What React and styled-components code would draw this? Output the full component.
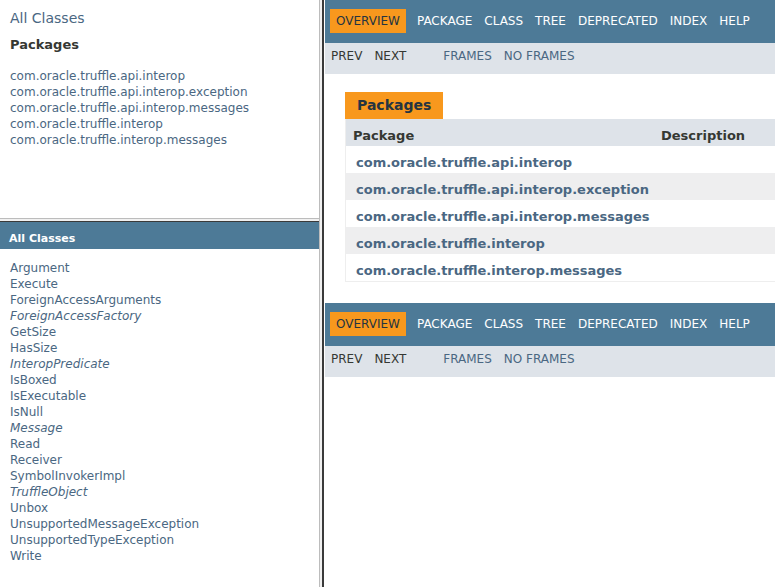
import React from "react";
import styled, { createGlobalStyle } from "styled-components";

const Global = createGlobalStyle`
  html, body { margin: 0; padding: 0; background: #fff; }
  body {
    font-family: "DejaVu Sans", Arial, Helvetica, sans-serif;
    font-size: 14px;
    color: #353833;
    overflow: hidden;
  }
  a { text-decoration: none; color: #4A6782; }
  ul { margin: 0; padding: 0; list-style: none; }
`;

const Frameset = styled.div`
  display: grid;
  grid-template-columns: 319px 6px 1fr;
  height: 587px;
  overflow: hidden;
`;

const LeftColumn = styled.div`
  display: grid;
  grid-template-rows: 218px 4px 1fr;
  min-height: 0;
  overflow: hidden;
`;

const VSep = styled.div`
  background: linear-gradient(
    to right,
    #bcbcbc 0 1px,
    #f0f0f0 1px 3px,
    #3a3a3a 3px 5px,
    #ffffff 5px 6px
  );
`;

const HSep = styled.div`
  background: linear-gradient(
    to bottom,
    #bcbcbc 0 1px,
    #f0f0f0 1px 3px,
    #3a3a3a 3px 4px
  );
`;

const Frame = styled.div`
  background: #fff;
  overflow: hidden;
  min-height: 0;
  display: flow-root;
`;

const IndexHeader = styled.div`
  margin: 10px;
  font-size: 14px;
  line-height: 17px;
`;

const IndexContainer = styled.div`
  margin: 10px;
  font-size: 12px;
`;

const IndexTitle = styled.h2`
  font-size: 13px;
  font-weight: bold;
  margin: 10px 0 12px;
  padding: 0 0 3px 0;
  line-height: 15px;
`;

const IndexItem = styled.li`
  padding-top: 2px;
  line-height: 14px;
  font-style: ${(p) => (p.$italic ? "italic" : "normal")};
`;

const Bar = styled.h1`
  background-color: #4d7a97;
  color: #fff;
  font-size: 11px;
  font-weight: bold;
  margin: 0;
  padding: 10px 5px 4px 9px;
  line-height: 13px;
`;

const RightFrame = styled.div`
  overflow: hidden;
  min-width: 0;
  display: flow-root;
`;

const TopNav = styled.div`
  background-color: #4d7a97;
  color: #fff;
  font-size: 12px;
  height: 34px;
  padding-top: 9px;
  display: flex;
  overflow: hidden;
`;

const NavList = styled.ul`
  display: flex;
  margin: 0 ${(p) => (p.$gap ? "25px" : "0")} 0 0;
`;

const NavItem = styled.li`
  padding: 5px 6px;
  line-height: 14px;
  height: 14px;
  text-transform: uppercase;
  white-space: nowrap;
  color: ${(p) => (p.$active ? "#253441" : "#fff")};
  background: ${(p) => (p.$active ? "#F8981D" : "transparent")};
  margin: ${(p) => (p.$active ? "0 5px" : "0")};
`;

const SubNav = styled.div`
  background-color: #dee3e9;
  font-size: 12px;
  display: flex;
  padding-top: 1px;
  padding-bottom: 6px;
`;

const SubItem = styled.li`
  padding: 5px 6px;
  line-height: 14px;
  text-transform: uppercase;
  white-space: nowrap;
  color: ${(p) => (p.$link ? "#4A6782" : "#353833")};
`;

const Content = styled.div`
  padding: 18px 20px 21px;
`;

const Summary = styled.div`
  width: 440px;
  border-left: 1px solid #eee;
  border-right: 1px solid #eee;
  border-bottom: 1px solid #eee;
`;

const Caption = styled.div`
  display: inline-block;
  vertical-align: top;
  background-color: #f8981d;
  color: #253441;
  font-weight: bold;
  font-size: 14px;
  line-height: 16px;
  height: 16px;
  padding: 5px 12px 6px;
  white-space: nowrap;
`;

const CaptionRow = styled.div`
  line-height: 0;
  display: flex;
`;

const Row = styled.div`
  display: grid;
  grid-template-columns: 308px 1fr;
  background: ${(p) => (p.$head ? "#dee3e9" : p.$alt ? "#eeeeef" : "#fff")};
  font-size: 13px;
  line-height: 16px;
`;

const HeadCell = styled.div`
  padding: 9px 3px 2px 7px;
  font-weight: bold;
  color: #353833;
  white-space: nowrap;
`;

const Cell = styled.div`
  padding: 9px 3px 2px 10px;
  font-weight: bold;
  white-space: nowrap;
`;

const packages = [
  "com.oracle.truffle.api.interop",
  "com.oracle.truffle.api.interop.exception",
  "com.oracle.truffle.api.interop.messages",
  "com.oracle.truffle.interop",
  "com.oracle.truffle.interop.messages",
];

const classes = [
  ["Argument"],
  ["Execute"],
  ["ForeignAccessArguments"],
  ["ForeignAccessFactory", true],
  ["GetSize"],
  ["HasSize"],
  ["InteropPredicate", true],
  ["IsBoxed"],
  ["IsExecutable"],
  ["IsNull"],
  ["Message", true],
  ["Read"],
  ["Receiver"],
  ["SymbolInvokerImpl"],
  ["TruffleObject", true],
  ["Unbox"],
  ["UnsupportedMessageException"],
  ["UnsupportedTypeException"],
  ["Write"],
];

const navItems = ["Overview", "Package", "Class", "Tree", "Deprecated", "Index", "Help"];

function NavBars() {
  return (
    <>
      <TopNav>
        <NavList>
          {navItems.map((n, i) => (
            <NavItem key={n} $active={i === 0}>
              {n}
            </NavItem>
          ))}
        </NavList>
      </TopNav>
      <SubNav>
        <NavList $gap>
          <SubItem>Prev</SubItem>
          <SubItem>Next</SubItem>
        </NavList>
        <NavList>
          <SubItem $link>
            <a href="#">Frames</a>
          </SubItem>
          <SubItem $link>
            <a href="#">No Frames</a>
          </SubItem>
        </NavList>
      </SubNav>
    </>
  );
}

export default function App() {
  return (
    <>
      <Global />
      <Frameset>
        <LeftColumn>
          <Frame>
            <IndexHeader>
              <a href="#">All Classes</a>
            </IndexHeader>
            <IndexContainer>
              <IndexTitle>Packages</IndexTitle>
              <ul>
                {packages.map((p) => (
                  <IndexItem key={p}>
                    <a href="#">{p}</a>
                  </IndexItem>
                ))}
              </ul>
            </IndexContainer>
          </Frame>
          <HSep />
          <Frame>
            <Bar>All Classes</Bar>
            <IndexContainer>
              <ul>
                {classes.map(([c, it]) => (
                  <IndexItem key={c} $italic={it}>
                    <a href="#">{c}</a>
                  </IndexItem>
                ))}
              </ul>
            </IndexContainer>
          </Frame>
        </LeftColumn>
        <VSep />
        <RightFrame>
          <NavBars />
          <Content>
            <CaptionRow>
              <Caption>Packages</Caption>
            </CaptionRow>
            <Summary>
              <Row $head>
                <HeadCell>Package</HeadCell>
                <HeadCell>Description</HeadCell>
              </Row>
              {packages.map((p, i) => (
                <Row key={p} $alt={i % 2 === 1}>
                  <Cell>
                    <a href="#">{p}</a>
                  </Cell>
                  <Cell />
                </Row>
              ))}
            </Summary>
          </Content>
          <NavBars />
        </RightFrame>
      </Frameset>
    </>
  );
}
